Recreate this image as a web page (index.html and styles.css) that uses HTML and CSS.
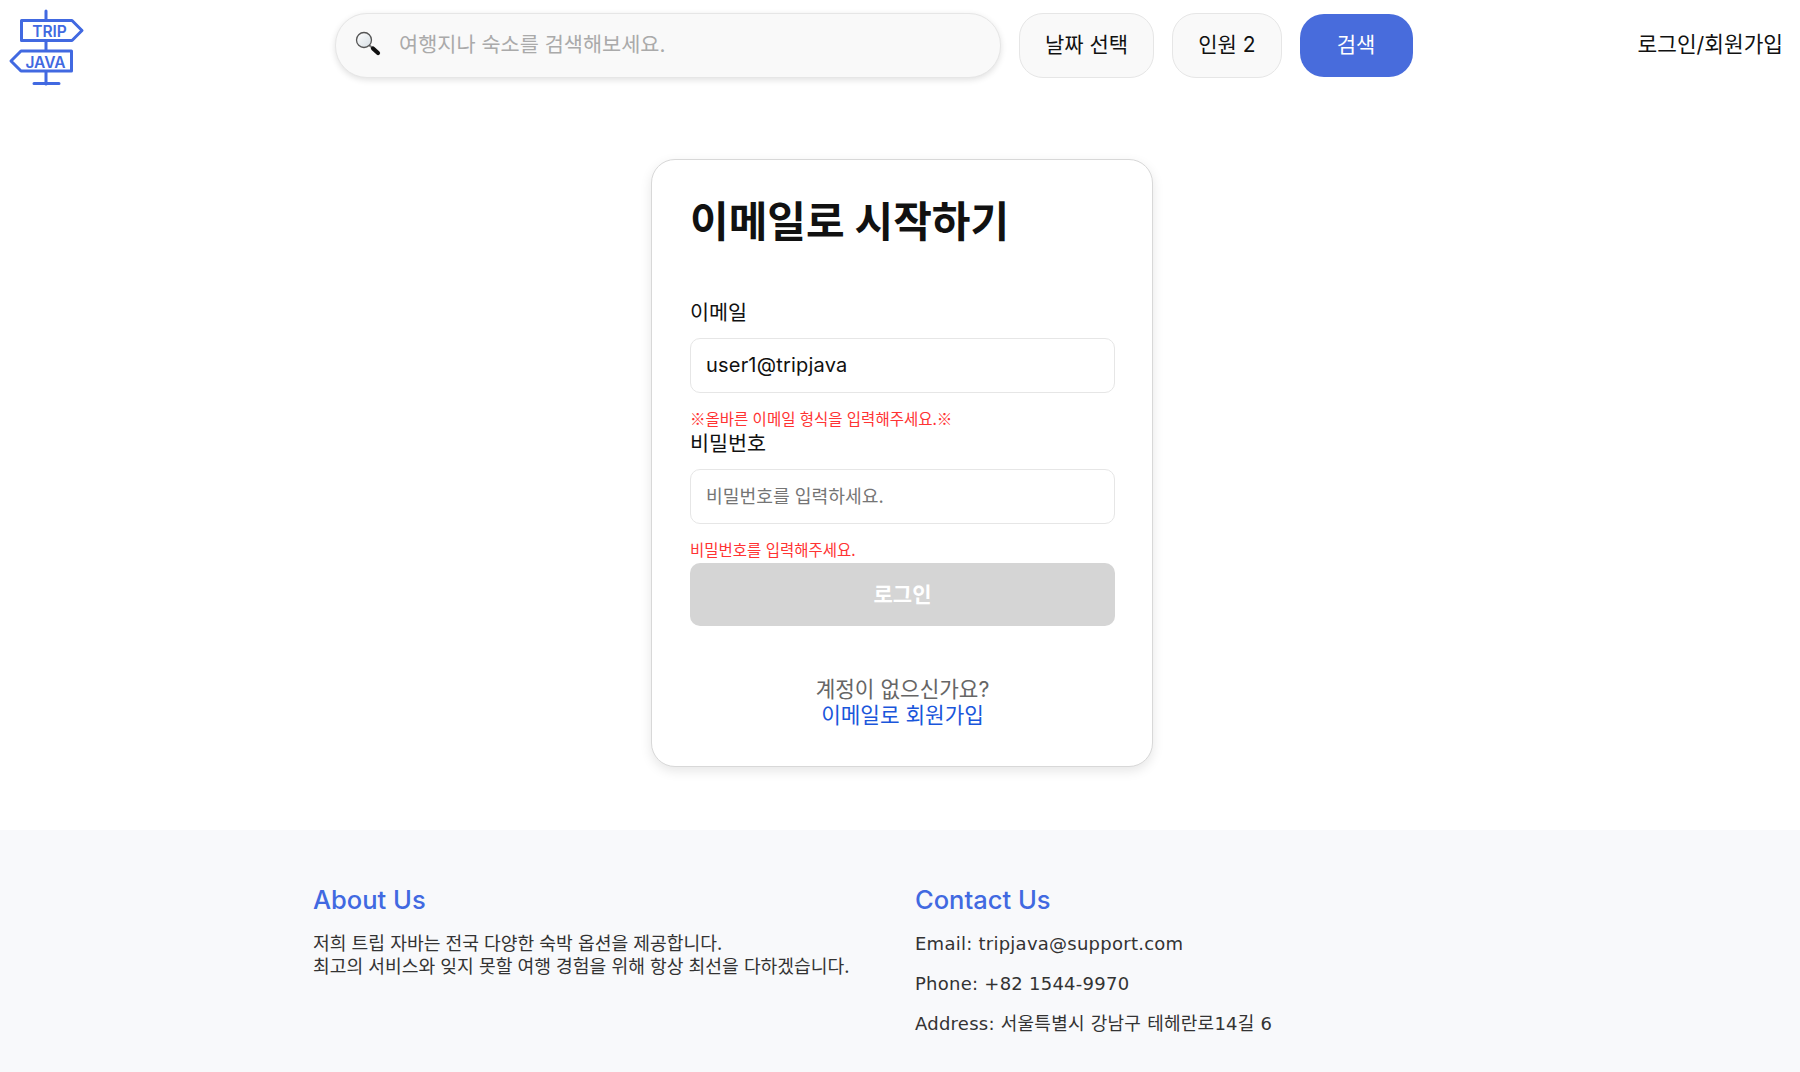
FILE: index.html
```html
<!DOCTYPE html>
<html lang="ko">

<head>
    <meta charset="UTF-8">
    <meta name="viewport" content="width=device-width, initial-scale=1.0">
    <title>Trip Java</title>
    <link rel="stylesheet" href="styles.css">
</head>

<body>
    <header class="header">
        <a class="logo" href="#" aria-label="Trip Java">
            <svg width="90" height="90" viewBox="0 0 90 90">
                <path d="M46 11V84M34 83.500H59" fill="none" stroke="#4169e1" stroke-width="3" stroke-linecap="round" />
                <path d="M21.500 20.500H72L82 30.500L72 40.500H21.500Z" fill="#fff" stroke="#4169e1" stroke-width="3" stroke-linejoin="round" />
                <path d="M71.500 51H21L11 61L21 71H71.500Z" fill="#fff" stroke="#4169e1" stroke-width="3" stroke-linejoin="round" />
                <text class="logo-text" x="49.500" y="37" text-anchor="middle">TRIP</text>
                <text class="logo-text" x="45.500" y="67.500" text-anchor="middle">JAVA</text>
            </svg>
        </a>
        <div class="search-bar">
            <div class="search-box">
                <svg class="search-icon" width="28" height="28" viewBox="0 0 28 28">
                    <defs>
                        <linearGradient id="lens" x1="0" y1="0" x2="1" y2="1">
                            <stop offset="0" stop-color="#ffffff" />
                            <stop offset="1" stop-color="#d5dde3" />
                        </linearGradient>
                    </defs>
                    <path d="M14 14L17.500 17" stroke="#777" stroke-width="2" />
                    <path d="M18 17.500L23 22" stroke="#111" stroke-width="4.200" stroke-linecap="round" />
                    <circle cx="9" cy="9" r="7.500" fill="url(#lens)" stroke="#555" stroke-width="1.300" />
                </svg>
                <input class="search-input" type="text" placeholder="여행지나 숙소를 검색해보세요.">
            </div>
            <button class="pill-btn">날짜 선택</button>
            <button class="pill-btn">인원 2</button>
            <button class="search-btn">검색</button>
        </div>
        <a class="login-link" href="#">로그인/회원가입</a>
    </header>

    <main class="main">
        <section class="card">
            <h1 class="card-title">이메일로 시작하기</h1>
            <form class="login-form">
                <label class="field-label" for="email">이메일</label>
                <input class="field-input" id="email" type="text" value="user1@tripjava">
                <p class="field-error">※올바른 이메일 형식을 입력해주세요.※</p>
                <label class="field-label" for="password">비밀번호</label>
                <input class="field-input" id="password" type="password" placeholder="비밀번호를 입력하세요.">
                <p class="field-error">비밀번호를 입력해주세요.</p>
                <button class="submit-btn" type="button" disabled>로그인</button>
            </form>
            <div class="signup">
                <p class="signup-text">계정이 없으신가요?</p>
                <a class="signup-link" href="#">이메일로 회원가입</a>
            </div>
        </section>
    </main>

    <footer class="footer">
        <div class="footer-col">
            <h2 class="footer-title">About Us</h2>
            <p class="footer-about">저희 트립 자바는 전국 다양한 숙박 옵션을 제공합니다.<br>최고의 서비스와 잊지 못할 여행 경험을 위해 항상 최선을 다하겠습니다.</p>
        </div>
        <div class="footer-col">
            <h2 class="footer-title">Contact Us</h2>
            <p class="footer-line">Email: tripjava@support.com</p>
            <p class="footer-line">Phone: +82 1544-9970</p>
            <p class="footer-line">Address: 서울특별시 강남구 테헤란로14길 6</p>
        </div>
    </footer>
</body>

</html>
```

FILE: styles.css
```css
:root {
    --blue: #4169e1;
    --line: #e6e6e6;
    --font: Inter, "Noto Sans CJK KR", sans-serif;
}

* {
    box-sizing: border-box;
}

body {
    margin: 0;
    background-color: #fff;
    color: #111;
    font-family: var(--font);
}

p,
h1,
h2 {
    margin: 0;
}

a {
    text-decoration: none;
}

button,
input {
    font-family: var(--font);
}

.header {
    display: flex;
    align-items: flex-start;
    height: 100px;
    padding: 0 17px 0 0;
}

.logo {
    display: block;
    width: 90px;
    height: 90px;
}

.logo-text {
    font-family: Inter, sans-serif;
    font-size: 15.500px;
    font-weight: 600;
    fill: var(--blue);
}

.search-bar {
    display: flex;
    align-items: center;
    gap: 18px;
    margin-top: 13px;
    margin-left: 245px;
}

.search-box {
    display: flex;
    align-items: center;
    width: 666px;
    height: 65px;
    padding: 0 0 2px 19px;
    background-color: #f9f9f9;
    border: 1px solid var(--line);
    border-radius: 32px;
    box-shadow: 0 2px 6px rgba(0, 0, 0, 0.12);
}

.search-icon {
    flex-shrink: 0;
}

.search-input {
    flex: 1;
    margin-left: 14px;
    border: none;
    outline: none;
    background: transparent;
    font-size: 20.800px;
}

.search-input::placeholder {
    color: #aaa;
}

.pill-btn {
    height: 65px;
    padding: 0 25px 6px;
    background-color: #f9f9f9;
    border: 1px solid var(--line);
    border-radius: 24px;
    color: #111;
    font-size: 21px;
}

.search-btn {
    width: 113px;
    height: 63px;
    padding-bottom: 6px;
    background-color: #486cdc;
    border: none;
    border-radius: 24px;
    color: #fff;
    font-size: 21px;
}

.login-link {
    margin-top: 27px;
    margin-left: auto;
    color: #111;
    font-size: 21.400px;
    line-height: 34px;
}

.main {
    display: flex;
    justify-content: center;
    padding: 59px 0 63px 4px;
}

.card {
    width: 502px;
    height: 608px;
    padding: 32px 37px 0 38px;
    background-color: #fff;
    border: 1px solid #d8d8d8;
    border-radius: 24px;
    box-shadow: 0 4px 12px rgba(0, 0, 0, 0.1);
}

.card-title {
    height: 70px;
    font-size: 42px;
    font-weight: 700;
    line-height: 60px;
}

.login-form {
    display: flex;
    flex-direction: column;
    margin-top: 37px;
}

.field-label {
    height: 28px;
    margin-bottom: 11px;
    font-size: 20.700px;
    line-height: 28px;
}

.field-input {
    height: 55px;
    padding: 0 15px 2px;
    border: 1px solid var(--line);
    border-radius: 10px;
    outline: none;
    color: #111;
    font-size: 20px;
    letter-spacing: 0.2px;
}

.field-input::placeholder {
    color: #757575;
    font-size: 18.200px;
    letter-spacing: 0;
}

.field-error {
    height: 23px;
    margin-top: 14px;
    color: #f33;
    font-family: "Noto Sans CJK KR", sans-serif;
    font-size: 15.500px;
    line-height: 22px;
}

.submit-btn {
    height: 63px;
    margin-top: 2px;
    padding-bottom: 5px;
    background-color: #d5d5d5;
    border: none;
    border-radius: 10px;
    color: #fff;
    font-size: 21px;
    font-weight: 700;
}

.signup {
    margin-top: 50px;
    font-size: 21.300px;
    line-height: 26px;
    text-align: center;
}

.signup-text {
    color: #666;
}

.signup-link {
    color: #1a56db;
}

.footer {
    display: grid;
    grid-template-columns: 602px 1fr;
    height: 242px;
    padding: 52px 0 0 313px;
    background-color: #f8f9fb;
    color: #333;
}

.footer-title {
    margin-bottom: 14px;
    color: var(--blue);
    font-size: 25.500px;
    font-weight: 500;
    line-height: 36px;
}

.footer-about {
    font-size: 18.200px;
    line-height: 23px;
}

.footer-line {
    margin-bottom: 16px;
    font-family: "DejaVu Sans", "Noto Sans CJK KR", sans-serif;
    font-size: 18px;
    letter-spacing: 0.25px;
    line-height: 24px;
}
```
